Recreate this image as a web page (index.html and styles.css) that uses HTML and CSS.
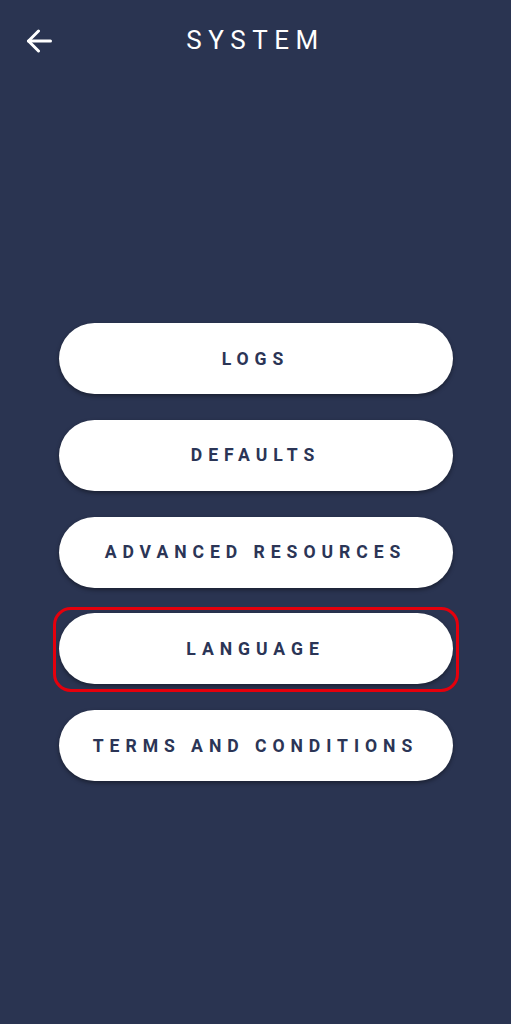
FILE: index.html
```html
<!DOCTYPE html>
<html lang="en">
<head>
<meta charset="utf-8">
<title>System</title>
<link rel="stylesheet" href="styles.css">
</head>
<body>
<div class="screen">
  <header class="topbar">
    <button class="back" aria-label="Back">
      <svg width="26" height="24" viewBox="0 0 26 24" fill="none" stroke="#ffffff" stroke-width="3" stroke-linecap="round" stroke-linejoin="round">
        <path d="M24.5 12H2.5"/>
        <path d="M12.5 2L2.5 12L12.5 22"/>
      </svg>
    </button>
    <h1 class="title">SYSTEM</h1>
  </header>
  <main class="menu">
    <button class="pill">LOGS</button>
    <button class="pill">DEFAULTS</button>
    <button class="pill">ADVANCED RESOURCES</button>
    <div class="highlight-wrap">
      <button class="pill">LANGUAGE</button>
      <span class="highlight"></span>
    </div>
    <button class="pill">TERMS AND CONDITIONS</button>
  </main>
</div>
</body>
</html>
```
FILE: styles.css
```css
html, body {
  margin: 0;
  padding: 0;
  background: #2a3451;
}
body {
  width: 511px;
  height: 1024px;
  overflow: hidden;
  font-family: Roboto, "Liberation Sans", sans-serif;
}
.screen {
  display: flex;
  flex-direction: column;
  height: 1024px;
}
.topbar {
  position: relative;
  height: 80px;
  display: flex;
  align-items: center;
  justify-content: center;
}
.back {
  position: absolute;
  left: 26px;
  top: 29px;
  width: 26px;
  height: 24px;
  padding: 0;
  border: 0;
  background: none;
  display: flex;
}
.title {
  margin: 0;
  color: #ffffff;
  font-weight: 400;
  font-size: 26px;
  letter-spacing: 6.5px;
  line-height: 1;
}
.menu {
  margin-top: 243px;
  display: flex;
  flex-direction: column;
  align-items: center;
  gap: 25.75px;
}
.pill {
  width: 394px;
  height: 71px;
  border: 0;
  border-radius: 36px;
  background: #ffffff;
  color: #2b3556;
  font-family: Roboto, "Liberation Sans", sans-serif;
  font-weight: 700;
  font-size: 17.6px;
  letter-spacing: 5.95px;
  padding: 0;
  box-shadow: 0 2px 4px rgba(0, 0, 0, 0.4);
  display: flex;
  align-items: center;
  justify-content: center;
}
.highlight-wrap {
  position: relative;
  display: flex;
}
.highlight {
  position: absolute;
  left: -6px;
  right: -6px;
  top: -6px;
  bottom: -8px;
  border: 3px solid #e5000c;
  border-radius: 18px;
  pointer-events: none;
}
```
